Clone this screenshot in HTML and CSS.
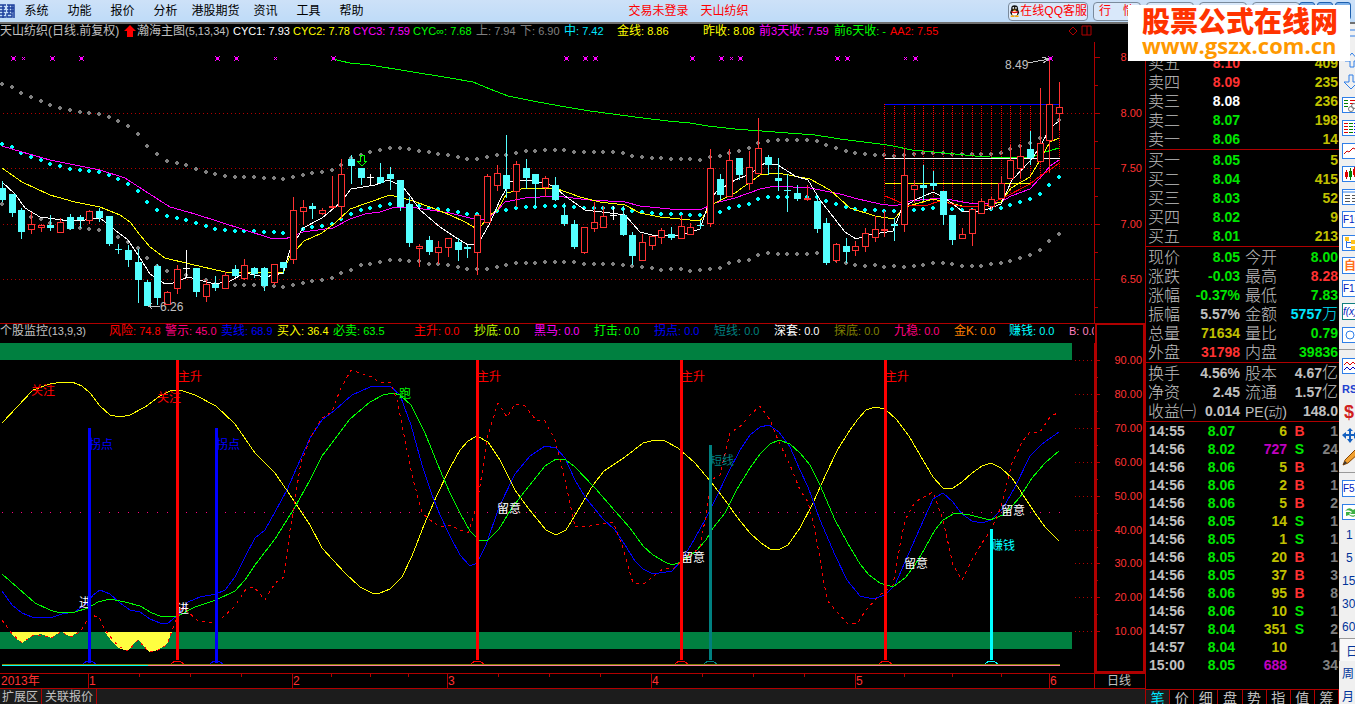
FILE: index.html
```
<!DOCTYPE html>
<html lang="zh-CN">
<head>
    <meta charset="UTF-8">
    <meta name="viewport" content="width=device-width, initial-scale=1.0">
    <title>天山纺织 日线</title>
    <link rel="stylesheet" href="styles.css">
</head>
<body>

<header class="topbar">
    <svg class="logo" viewBox="0 0 15 18"><path d="M0 3h6M0 6h5M0 9h6M0 12h5M0 15h6M3 3v13M7 3h7v13M7 6h7M7 9h7M7 12h5v3H7zM9 3v9M12 3v8" fill="none" stroke="#1d3f9c" stroke-width="1.5"/></svg>
    <nav class="menu">
        <a href="#">系统</a>
        <a href="#">功能</a>
        <a href="#">报价</a>
        <a href="#">分析</a>
        <a href="#" class="wide">港股期货</a>
        <a href="#">资讯</a>
        <a href="#">工具</a>
        <a href="#">帮助</a>
    </nav>
    <div class="title"><span>交易未登录</span><span>天山纺织</span></div>
    <div class="top-buttons">
        <button class="qq">
            <svg viewBox="0 0 13 14" width="13" height="14"><ellipse cx="6.500" cy="8.500" rx="5" ry="4.500" fill="#111"/><circle cx="6.500" cy="4.500" r="4" fill="#111"/><ellipse cx="6.500" cy="9.500" rx="3" ry="3" fill="#fff"/><circle cx="5" cy="3.500" r="1" fill="#fff"/><circle cx="8" cy="3.500" r="1" fill="#fff"/><path d="M4 5.500h5l-2.500 1.500z" fill="#fa0"/><path d="M2.500 7q4 2 8 0v1.500q-4 2-8 0z" fill="#e11"/><path d="M2 13h4M7 13h4" stroke="#fa0" stroke-width="1.500"/></svg>在线QQ客服</button>
        <button class="quote-btn">行　情</button>
        <button class="quote-btn" aria-label="资讯"></button>
        <button class="quote-btn" aria-label="交易"></button>
        <button class="quote-btn" aria-label="服务"></button>
    </div>
    <div class="win-buttons"><button aria-label="最小化"></button><button aria-label="最大化"></button><button aria-label="关闭"></button></div>
</header>

<div class="workspace">
    <main class="charts">
        <div class="info price-info">
            <span class="silver">天山纺织(日线.前复权)</span>
            <svg viewBox="0 0 12 12" width="12" height="12"><path d="M6 0l6 6H9v6H3V6H0z" fill="#f00"/></svg>
            <span class="silver">瀚海主图<i>(5,13,34)</i></span>
            <span class="white"><i>CYC1: 7.93</i></span>
            <span class="yellow"><i>CYC2: 7.78</i></span>
            <span class="magenta"><i>CYC3: 7.59</i></span>
            <span class="lime"><i>CYC∞: 7.68</i></span>
            <span class="gray">上<i>: 7.94</i></span>
            <span class="gray">下<i>: 6.90</i></span>
            <span class="cyan">中<i>: 7.42</i></span>
            <span class="yellow">金线<i>: 8.86</i></span>
            <span class="yellow">昨收<i>: 8.08</i></span>
            <span class="magenta">前<i>3</i>天收<i>: 7.59</i></span>
            <span class="lime">前<i>6</i>天收<i>: -</i></span>
            <span class="red"><i>AA2: 7.55</i></span>
            <svg class="corner" viewBox="0 0 24 12" width="24" height="12"><path d="M5 2l4 4-4 4-4-4zM14 1h9v9h-9zM19 1v9" fill="none" stroke="#b00000"/></svg>
        </div>
        <svg class="chart" id="priceChart" viewBox="0 42 1145 281"></svg>

        <div class="info signal-info">
            <span class="silver">个股监控<i>(13,9,3)</i></span>
            <span class="red">风险<i>: 74.8</i></span>
            <span class="pink">警示<i>: 45.0</i></span>
            <span class="blue">卖线<i>: 68.9</i></span>
            <span class="yellow">买入<i>: 36.4</i></span>
            <span class="lime">必卖<i>: 63.5</i></span>
            <span class="red">主升<i>: 0.0</i></span>
            <span class="chartreuse">抄底<i>: 0.0</i></span>
            <span class="magenta">黑马<i>: 0.0</i></span>
            <span class="lime">打击<i>: 0.0</i></span>
            <span class="blue">拐点<i>: 0.0</i></span>
            <span class="teal">短线<i>: 0.0</i></span>
            <span class="white">深套<i>: 0.0</i></span>
            <span class="olive">探底<i>: 0.0</i></span>
            <span class="pink">九稳<i>: 0.0</i></span>
            <span class="orange">金K<i>: 0.0</i></span>
            <span class="aqua">赚钱<i>: 0.0</i></span>
            <span class="rose"><i>B: 0.0</i></span>
            <span class="box-top"></span>
        </div>
        <svg class="chart" id="signalChart" viewBox="0 343 1145 346"></svg>

        <footer class="tabs">
            <a href="#">扩展区</a>
            <a href="#">关联报价</a>
        </footer>
    </main>

    <aside class="quotes">
        <table class="depth">
            <tr><th>卖五</th><td class="up">8.10</td><td class="vol">409</td></tr>
            <tr><th>卖四</th><td class="up">8.09</td><td class="vol">235</td></tr>
            <tr><th>卖三</th><td class="white">8.08</td><td class="vol">236</td></tr>
            <tr><th>卖二</th><td class="down">8.07</td><td class="vol">198</td></tr>
            <tr><th>卖一</th><td class="down">8.06</td><td class="vol">14</td></tr>
        </table>
        <table class="depth ruled">
            <tr><th>买一</th><td class="down">8.05</td><td class="vol">5</td></tr>
            <tr><th>买二</th><td class="down">8.04</td><td class="vol">415</td></tr>
            <tr><th>买三</th><td class="down">8.03</td><td class="vol">52</td></tr>
            <tr><th>买四</th><td class="down">8.02</td><td class="vol">9</td></tr>
            <tr><th>买五</th><td class="down">8.01</td><td class="vol">213</td></tr>
        </table>
        <table class="stats ruled">
            <tr><th>现价</th><td class="down">8.05</td><th>今开</th><td class="down">8.00</td></tr>
            <tr><th>涨跌</th><td class="down">-0.03</td><th>最高</th><td class="up">8.28</td></tr>
            <tr><th>涨幅</th><td class="down">-0.37%</td><th>最低</th><td class="down">7.83</td></tr>
            <tr><th>振幅</th><td>5.57%</td><th>金额</th><td class="cyan">5757<small>万</small></td></tr>
            <tr><th>总量</th><td class="vol">71634</td><th>量比</th><td class="down">0.79</td></tr>
            <tr><th>外盘</th><td class="up">31798</td><th>内盘</th><td class="down">39836</td></tr>
        </table>
        <table class="stats ruled">
            <tr><th>换手</th><td>4.56%</td><th>股本</th><td>4.67<small>亿</small></td></tr>
            <tr><th>净资</th><td>2.45</td><th>流通</th><td>1.57<small>亿</small></td></tr>
            <tr><th>收益㈠</th><td>0.014</td><th class="pe">PE(动)</th><td>148.0</td></tr>
        </table>
        <table class="ticks ruled">
            <tr><td>14:55</td><td class="down">8.07</td><td class="vol">6</td><td class="up">B</td><td>1</td></tr>
            <tr><td>14:56</td><td class="down">8.02</td><td class="big">727</td><td class="down">S</td><td>24</td></tr>
            <tr><td>14:56</td><td class="down">8.06</td><td class="vol">5</td><td class="up">B</td><td>1</td></tr>
            <tr><td>14:56</td><td class="down">8.06</td><td class="vol">2</td><td class="up">B</td><td>1</td></tr>
            <tr><td>14:56</td><td class="down">8.06</td><td class="vol">5</td><td class="up">B</td><td>2</td></tr>
            <tr><td>14:56</td><td class="down">8.05</td><td class="vol">14</td><td class="down">S</td><td>1</td></tr>
            <tr><td>14:56</td><td class="down">8.05</td><td class="vol">1</td><td class="down">S</td><td>1</td></tr>
            <tr><td>14:56</td><td class="down">8.05</td><td class="vol">20</td><td class="up">B</td><td>1</td></tr>
            <tr><td>14:56</td><td class="down">8.05</td><td class="vol">37</td><td class="up">B</td><td>3</td></tr>
            <tr><td>14:56</td><td class="down">8.06</td><td class="vol">95</td><td class="up">B</td><td>8</td></tr>
            <tr><td>14:56</td><td class="down">8.06</td><td class="vol">10</td><td class="down">S</td><td>1</td></tr>
            <tr><td>14:57</td><td class="down">8.04</td><td class="vol">351</td><td class="down">S</td><td>2</td></tr>
            <tr><td>14:57</td><td class="down">8.04</td><td class="vol">10</td><td></td><td>1</td></tr>
            <tr><td>15:00</td><td class="down">8.05</td><td class="big">688</td><td></td><td>34</td></tr>
        </table>
        <nav class="quote-tabs">
            <a href="#" class="active">笔</a><a href="#">价</a><a href="#">细</a><a href="#">盘</a><a href="#">势</a><a href="#">指</a><a href="#">值</a><a href="#">筹</a>
        </nav>
    </aside>

    <div class="toolbar">
        <button aria-label="返回"><svg viewBox="0 0 20 20"><path d="M20 4H4M20 10H4" class="ln"/></svg></button>
        <button aria-label="上翻"><svg viewBox="0 0 20 20"><path d="M8 18V12H3L10 4l7 8h-5v6z" class="ln"/></svg></button>
        <button aria-label="下翻"><svg viewBox="0 0 20 20"><path d="M7 3v7H2l7 7 7-7h-5V3z" class="ln"/></svg></button>
        <button aria-label="列表"><svg viewBox="1 1 18 14" class="boxed"><path d="M2 3.500h4M2 6.500h4M2 9.500h4" stroke="#008000"/><path d="M8 3.500h6M8 6.500h4" stroke="#e00000"/><circle cx="9" cy="12" r="2.500" class="gr"/><circle cx="12" cy="9" r="2.500" class="gr"/></svg></button>
        <button aria-label="报价表"><svg viewBox="1 1 18 14" class="boxed"><path d="M2 3.500h4M2 6.500h4M2 9.500h4M2 12.500h4" stroke="#e00000"/><path d="M7 3.500h4M7 6.500h4M7 9.500h4M7 12.500h4" stroke="#008000"/><path d="M12 3.500h4M12 6.500h4M12 9.500h4M12 12.500h4" stroke="#0000ff"/></svg></button>
        <button aria-label="分时"><svg viewBox="1 1 18 14" class="boxed"><path d="M2 11l3-3 2 1 4-4 2 1 3-4" stroke="#d00000" fill="none"/></svg></button>
        <button aria-label="K线"><svg viewBox="1 1 18 14" class="boxed"><path d="M4.500 4v9M12.500 1v10" stroke="#d00000"/><path d="M8.500 2v12" stroke="#008000"/><path d="M3 6h3v5H3zM11 3h3v6h-3z" fill="#e00000"/><path d="M7 5h3v6H7z" fill="#008000"/></svg></button>
        <button aria-label="窗口"><svg viewBox="1 1 18 14" class="boxed"><path d="M1 3h17" class="ln"/><path d="M3 6.500h5M3 9.500h5M3 12.500h5M10 6.500h5M10 9.500h5M10 12.500h5" stroke="#555"/></svg></button>
        <button class="txt frame">F10</button>
        <button aria-label="板块"><svg viewBox="1 1 18 14" class="boxed"><path d="M4.500 4v8.500H10M4 7.500h6" stroke="#2f6fe0" fill="none"/><path d="M3 2h4v4H3zM9 5h6v4H9zM9 11h6v4H9z" fill="#ffc320"/></svg></button>
        <button class="txt frame orange">自</button>
        <button class="txt frame">F12</button>
        <button class="txt frame fx">f(x)</button>
        <button aria-label="圆"><svg viewBox="1 1 18 14" class="boxed"><circle cx="8" cy="8" r="4" class="ln"/></svg></button>
        <hr>
        <button aria-label="叠加"><svg viewBox="1 1 18 14" class="boxed"><path d="M2 7l3-3 3 3 3-3 3 3 3-3" stroke="#e00000" fill="none"/><path d="M2 12l3-3 3 3 3-3 3 3 3-3" stroke="#0000c0" fill="none"/></svg></button>
        <button class="txt rsi">RSI</button>
        <button class="txt dollar">$</button>
        <button aria-label="移动"><svg viewBox="0 0 20 20"><path d="M8 3l3 3H9v3h3V7l3 3-3 4v-3H9v3h2l-3 4-3-4h2v-3H4v3l-4-4 4-3v2h3V6H5z" fill="#1460c0"/></svg></button>
        <button aria-label="画线"><svg viewBox="0 0 20 20"><path d="M1 17l2-5L13 2l4 3L6 15z" fill="#f0a030" stroke="#884400"/><path d="M1 17l2-4 2 2z" fill="#333"/></svg></button>
        <hr>
        <button class="txt frame">F5</button>
        <button aria-label="刷新"><svg viewBox="1 1 18 14" class="boxed"><path d="M3 7q4-5 8-1l2-1v5H8l2-2q-3-3-7-1zM15 10q-4 5-8 1l-3 1V8h5l-2 2q3 3 8 0z" fill="#3cb043"/></svg></button>
        <button class="txt num">1</button>
        <button class="txt num">5</button>
        <button class="txt">15</button>
        <button class="txt">30</button>
        <button class="txt">60</button>
        <button class="txt day">日</button>
        <button class="txt">周</button>
        <button class="txt">月</button>
    </div>
</div>

<div class="watermark">
    <strong>股票公式在线网</strong>
    <span>www.gszx.com.cn</span>
</div>

<script src="charts.js"></script>
</body>
</html>
```
FILE: styles.css
```
* {
    box-sizing: border-box;
}
body {
    margin: 0;
    min-height: 100vh;
    display: flex;
    flex-direction: column;
    background: #000;
    color: #c0c0c0;
    font-family: "Liberation Sans", "Noto Sans CJK SC", sans-serif;
    font-size: 12px;
    overflow: hidden;
}
a {
    color: inherit;
    text-decoration: none;
}
button {
    font: inherit;
    padding: 0;
    border: 0;
    background: none;
}

/* top bar */
.topbar {
    height: 24px;
    flex: none;
    display: flex;
    align-items: center;
    background: linear-gradient(#cde1f8, #bedbf8);
    border-bottom: 2px solid #707070;
    color: #000;
    line-height: 16px;
    overflow: hidden;
}
.logo {
    width: 15px;
    height: 18px;
}
.menu {
    display: flex;
}
.menu a {
    width: 43px;
    text-align: center;
}
.menu .wide {
    width: 57px;
}
.title {
    flex: 1;
    display: flex;
    justify-content: center;
    gap: 12px;
    padding-right: 4px;
    color: #f00;
}
.top-buttons {
    display: flex;
    gap: 5px;
    width: 291px;
}
.top-buttons button {
    flex: none;
    height: 19px;
    border: 1px solid #7a8a9c;
    border-radius: 4px;
    background: #d9e8fa;
    color: #f00;
    white-space: nowrap;
}
.top-buttons .qq {
    width: 80px;
    display: flex;
    align-items: center;
    justify-content: center;
}
.top-buttons .quote-btn {
    width: 48px;
}
.win-buttons {
    display: flex;
    gap: 2px;
    width: 56px;
}
.win-buttons button {
    width: 16px;
    height: 18px;
    border: 1px solid #1d5fae;
    border-radius: 3px;
    background: #7fb2ea;
}

.workspace {
    flex: 1;
    display: flex;
    align-items: stretch;
}
.charts {
    flex: 1;
    min-width: 0;
    display: flex;
    flex-direction: column;
}
.chart {
    display: block;
    width: 100%;
    height: auto;
    shape-rendering: crispEdges;
}
.chart text {
    font-size: 12px;
}
.chart .scale {
    font-size: 11px;
    fill: #ff3232;
    text-anchor: end;
}

/* value strips above the charts */
.info {
    display: grid;
    align-items: start;
    height: 18px;
    line-height: 15px;
    white-space: nowrap;
    overflow: hidden;
}
.info i {
    font-size: 11px;
    font-style: normal;
}
.info > span {
    overflow: hidden;
}
.info > svg {
    margin-top: 1px;
}
.price-info {
    grid-template-columns: 124px 13px 96px 60px 60px 60px 63px 44px 44px 53px 86px 56px 75px 56px 178px 1fr;
}
.signal-info {
    height: 20px;
    border-top: 1px solid #b00000;
    grid-template-columns: 109px 56px 56px 56px 56px 81px 60px 60px 60px 60px 60px 60px 60px 60px 60px 55px 60px 25px 1fr;
}
.box-top {
    align-self: stretch;
    border: 2px solid #b00000;
    border-top-width: 1px;
    border-bottom: 0;
    margin-left: 1px;
}
.tabs {
    height: 15px;
    display: flex;
    background: #1c1c1c;
    line-height: 16px;
    overflow: hidden;
}
.tabs a {
    padding: 0 3px 0 2px;
    border-right: 1px solid #b00000;
}
.tabs a + a {
    padding: 0 3px;
}

/* colours */
.silver { color: #c0c0c0; }
.white { color: #fff; }
.yellow { color: #ffff00; }
.magenta { color: #ff00ff; }
.lime { color: #00ff00; }
.gray { color: #808080; }
.cyan { color: #00e6ff; }
.aqua { color: #00ffff; }
.red { color: #ff0000; }
.pink { color: #ff0080; }
.blue { color: #0000ff; }
.chartreuse { color: #c0ff00; }
.teal { color: #008080; }
.olive { color: #808000; }
.orange { color: #ff8000; }
.rose { color: #ff80c0; }
.up { color: #ff3232; }
.down { color: #00e600; }
.vol { color: #c0c000; }
.big { color: #c000c0; }

/* quote panel */
.quotes {
    width: 194px;
    flex: none;
    display: flex;
    flex-direction: column;
    padding-top: 30px;
    border-left: 1px solid #b00000;
    background: #000;
}
.quotes table {
    width: 100%;
    table-layout: fixed;
    border-collapse: separate;
    border-spacing: 0;
}
.quotes .ruled {
    border-top: 1px solid #b00000;
    padding-top: 1px;
}
.quotes th,
.quotes td {
    height: 19px;
    padding: 0 1px 0 0;
    line-height: 18px;
    white-space: nowrap;
}
.quotes th {
    width: 34px;
    padding-left: 2px;
    font-size: 16px;
    font-weight: 300;
    text-align: left;
}
.quotes td {
    font-size: 14px;
    font-weight: bold;
    text-align: right;
    padding-bottom: 1px;
    line-height: 17px;
}
.quotes small {
    font-size: 16px;
    font-weight: 300;
    line-height: 16px;
}
.depth td:nth-child(2),
.stats td:nth-child(2) {
    width: 61px;
}
.stats th:nth-child(3) {
    width: 38px;
    padding-left: 4px;
}
.stats .pe {
    font-size: 14px;
}
.quotes .ticks td {
    height: 18px;
}
.ticks td:nth-child(1) {
    width: 40px;
    text-align: left;
    padding-left: 3px;
}
.ticks td:nth-child(2) {
    width: 50px;
}
.ticks td:nth-child(3) {
    width: 52px;
}
.ticks td:nth-child(4) {
    width: 24px;
    text-align: center;
}
.ticks td:nth-child(5) {
    color: #808080;
}
.quote-tabs {
    height: 15px;
    margin-top: auto;
    display: flex;
    border-top: 1px solid #b00000;
    overflow: hidden;
    font-size: 14px;
    line-height: 16px;
}
.quote-tabs a {
    flex: 1;
    text-align: center;
    border-right: 1px solid #b00000;
}
.quote-tabs .active {
    color: #00e6ff;
    background: #1c1c1c;
}

/* right toolbar, cut by the window edge */
.toolbar {
    width: 16px;
    height: 0;
    min-height: 680px;
    flex: none;
    display: flex;
    flex-direction: column;
    background: #f0f0f0;
    overflow: hidden;
}
.toolbar button {
    flex: none;
    width: 20px;
    height: 23px;
    padding-left: 3px;
    text-align: left;
    color: #003399;
    white-space: nowrap;
}
.toolbar svg {
    display: block;
    width: 20px;
    height: 20px;
}
.toolbar svg.boxed {
    height: 16px;
    border: 1px solid #2f7fe8;
    background: #fff;
}
.toolbar .ln {
    fill: none;
    stroke: #2f7fe8;
}
.toolbar .gr {
    fill: none;
    stroke: #777;
}
.toolbar .frame {
    width: 24px;
    height: 17px;
    margin: 3px 0 3px 3px;
    padding-left: 0;
    border: 1px solid #2f7fe8;
    background: #fff;
    color: #0020c0;
    font-size: 10px;
    line-height: 14px;
}
.toolbar .frame.orange {
    padding-left: 1px;
    color: #ff7020;
    font-size: 12px;
    font-weight: bold;
}
.toolbar .frame.fx {
    border-color: #108080;
    font-style: italic;
}
.toolbar .rsi {
    font-size: 11px;
    font-weight: bold;
    color: #2040d0;
}
.toolbar .dollar {
    padding-left: 5px;
    font-size: 18px;
    line-height: 20px;
    font-weight: bold;
    color: #d02020;
}
.toolbar .num {
    padding-left: 7px;
}
.toolbar .day {
    padding-left: 6px;
    background: #f8f8f8;
    border-top: 1px solid #999;
    border-left: 1px solid #999;
}
.toolbar hr {
    flex: none;
    width: 100%;
    height: 1px;
    margin: 3px 0 4px;
    border: 0;
    background: #999;
}

/* site badge over the window corner */
.watermark {
    position: absolute;
    top: 5px;
    right: 5px;
    width: 222px;
    height: 56px;
    padding: 1px 0 0 14px;
    background: #fff;
    white-space: nowrap;
}
.watermark strong {
    display: block;
    font-family: "Noto Sans CJK SC", sans-serif;
    font-size: 28px;
    font-weight: 900;
    line-height: 29px;
    color: #ff3300;
}
.watermark span {
    display: block;
    font-family: "Open Sans", sans-serif;
    font-size: 22px;
    font-weight: bold;
    line-height: 20px;
    color: #ff9900;
}
```
FILE: charts.js
```
const NS = "http://www.w3.org/2000/svg";
const X = i => 2 + Math.round(i * 9.697);

function add(svg, tag, attrs, text) {
    const el = document.createElementNS(NS, tag);
    for (const k in attrs) el.setAttribute(k, attrs[k]);
    if (text) el.textContent = text;
    svg.appendChild(el);
}
function line(svg, points, color, extra) {
    add(svg, "polyline", Object.assign({ points: points, fill: "none", stroke: color }, extra));
}
function rect(svg, x, y, w, h, color) {
    add(svg, "rect", { x: x, y: y, width: w, height: h, fill: color });
}
function label(svg, x, y, text, color) {
    add(svg, "text", { x: x, y: y, fill: color }, text);
}

/* type, body top, body bottom, high, low */
const candles = [
    ["d",188,200,181,202],["d",194,213,194,217],["d",210,232,208,239],["u",224,230,212,234],["u",225,228,224,232],
    ["d",225,228,215,231],["u",222,233,218,233],["d",217,229,214,230],["d",217,220,215,228],["u",211,221,210,224],
    ["d",211,218,208,222],["d",216,244,216,246],["d",249,250,244,254],["d",250,260,245,267],["d",262,280,249,303],
    ["d",282,306,280,306],["d",266,298,264,305],["u",292,305,291,305],["u",269,289,265,294],["w",268,269,250,278],
    ["d",268,292,268,297],["u",284,297,280,302],["d",284,288,276,291],["u",275,289,272,289],["d",269,276,265,277],
    ["u",265,279,259,280],["d",268,274,267,278],["d",268,286,267,291],["u",264,283,264,285],["d",262,268,262,274],
    ["u",210,260,197,264],["u",207,212,200,225],["d",206,209,203,219],["u",210,214,208,215],["u",206,208,176,209],
    ["u",174,207,159,219],["d",159,166,155,184],["d",168,178,168,185],["w",177,178,174,186],["d",177,183,163,184],
    ["d",174,179,167,190],["d",180,207,180,211],["d",204,243,197,247],["u",246,249,244,267],["d",240,252,236,255],
    ["u",247,253,241,264],["u",238,248,238,257],["d",242,250,238,261],["d",247,249,245,258],["u",215,253,214,275],
    ["u",176,223,174,223],["u",173,186,165,191],["d",175,189,135,198],["u",164,192,161,207],["d",168,178,159,189],
    ["d",174,184,174,207],["u",178,188,176,197],["d",185,200,177,201],["d",215,224,203,226],["d",224,247,220,249],
    ["u",227,253,227,254],["u",222,229,202,232],["u",216,228,206,228],["w",215,216,206,220],["d",215,235,206,236],
    ["d",235,256,232,265],["u",242,261,234,261],["u",236,246,236,250],["u",230,238,228,244],["d",234,238,227,240],
    ["u",226,239,215,239],["u",227,235,223,235],["d",225,226,220,229],["u",168,224,149,227],["d",179,195,174,200],
    ["u",160,197,149,197],["d",158,175,158,180],["u",167,184,151,190],["u",148,174,118,174],["d",157,165,155,175],
    ["d",178,181,158,191],["d",190,191,174,212],["d",193,199,185,201],["u",198,200,185,201],["d",201,229,198,233],
    ["d",223,263,218,265],["u",244,261,243,263],["d",246,252,238,263],["u",246,251,241,256],["u",233,247,228,252],
    ["u",229,238,216,242],["u",229,231,211,237],["d",224,226,218,241],["u",175,225,148,232],["u",185,190,180,203],
    ["d",185,188,165,201],["d",183,186,171,190],["d",191,215,191,225],["d",215,240,215,245],["u",234,239,228,239],
    ["u",209,234,209,246],["u",201,214,198,214],["u",199,207,197,210],["u",183,199,176,199],["u",160,179,145,179],
    ["u",156,169,145,178],["d",149,158,131,165],["u",143,162,88,162],["u",104,141,60,172],["u",107,114,82,130]
];

const upper = [84,87,93,97,101,105,108,110,112,113,114,117,121,126,134,146,154,161,163,165,169,172,174,176,177,177,177,178,178,179,177,175,173,172,170,165,158,155,152,150,148,148,149,151,152,154,155,157,159,159,157,155,155,153,151,151,150,150,150,152,152,152,152,152,153,156,157,158,158,159,159,159,160,157,156,153,151,148,143,141,140,140,140,140,141,145,148,151,153,154,155,155,156,155,154,153,153,153,154,154,154,154,154,153,149,146,143,138,129,120];
const middle = [144,147,153,157,160,164,166,169,170,171,172,175,179,184,191,202,210,216,218,220,223,226,229,230,231,231,231,232,232,233,231,229,227,226,224,219,214,210,208,206,204,204,205,206,208,209,210,212,214,214,213,211,210,208,207,207,206,206,206,207,208,208,208,208,209,211,212,213,214,214,214,215,215,213,212,208,206,204,199,197,197,197,197,197,197,201,204,207,209,210,210,211,211,211,210,209,208,208,209,210,210,210,209,208,205,202,199,194,185,177];

function dot(svg, x, y, color) {
    rect(svg, x - 2, y - 1, 4, 2, color);
    rect(svg, x - 1, y - 2, 2, 4, color);
}

function drawPrice() {
    const svg = document.getElementById("priceChart");

    [113, 168, 224, 279].forEach(y => line(svg, `3,${y + .5} 1094,${y + .5}`, "#b00000", { "stroke-dasharray": "1 3" }));

    // band dots
    for (let i = 0; i < 110; i++) {
        dot(svg, X(i), upper[i], "#808080");
        dot(svg, X(i), 2 * middle[i] - upper[i], "#808080");
        dot(svg, X(i), middle[i], "#00ffff");
    }

    // target box
    for (let i = 91; i < 110; i++) {
        const bottom = i < 103 ? 203 : 203 - (i - 103) * 6;
        line(svg, `${X(i) + .5},104 ${X(i) + .5},${bottom}`, "#ff0000", { "stroke-dasharray": "1 1" });
    }
    rect(svg, 885, 104, 175, 1, "#0000ff");
    rect(svg, 885, 158, 175, 1, "#ffffff");
    rect(svg, 885, 183, 145, 1, "#ffff00");

    line(svg, "333,59 341,61 350,63 370,65 450,78 473,82 490,89 508,96 533,101 560,106 590,111 620,115 643,118 668,121 690,123 708,126 735,129 775,132 815,135 840,139 880,144 893,146 912,150 945,153 975,156 990,157 1030,158 1045,152 1059,148", "#00ff00");
    line(svg, "2,146 22,152 50,160 100,170 125,178 145,191 170,207 195,214 220,222 245,230 270,238 285,239 303,232 333,228 350,219 365,214 380,212 395,207 410,207 430,210 450,213 470,218 485,220 495,213 505,202 525,198 555,196 590,200 625,202 640,206 670,209 700,210 715,203 735,198 760,189 775,186 810,188 840,194 858,199 880,204 895,206 910,201 940,198 975,204 1001,202 1011,196 1030,189 1040,178 1050,166 1059,160", "#ff00ff");
    line(svg, "2,168 22,182 50,195 75,202 100,207 120,215 130,222 140,235 150,247 165,258 190,264 225,272 250,272 283,273 290,256 296,250 304,241 322,233 334,224 350,209 370,202 390,195 410,200 430,207 450,215 465,222 477,229 482,225 488,216 497,211 507,193 525,188 555,188 580,197 600,202 625,205 640,213 660,217 700,221 707,211 715,203 735,193 760,175 778,173 810,179 830,190 850,208 875,216 894,219 905,207 933,199 945,202 962,206 985,206 1001,202 1011,188 1030,177 1040,160 1050,142 1059,138", "#ffff00");
    line(svg, "2,182 15,194 25,208 40,217 70,221 85,220 100,218 115,230 128,240 140,258 150,274 165,284 173,283 188,277 215,284 230,281 245,273 265,277 283,273 290,250 303,228 322,218 340,203 351,189 375,185 388,180 402,186 411,197 420,210 440,227 455,237 468,245 478,244 490,223 500,200 510,182 525,180 545,183 555,187 565,196 585,210 610,213 625,215 640,232 652,235 680,235 700,229 708,205 716,192 735,180 750,174 765,163 778,165 795,176 808,180 820,200 845,232 856,239 868,235 893,231 902,208 915,200 933,192 945,198 962,211 980,212 1001,204 1012,180 1030,161 1040,147 1050,128 1059,121", "#ffffff");
    line(svg, "885,196 895,200 905,205 925,206 940,201 960,206 985,206 1005,197 1030,184 1040,176 1050,170 1059,163", "#ff0000");

    candles.forEach((c, i) => {
        const [type, top, bottom, high, low] = c;
        const x = X(i);
        if (type === "u") {
            rect(svg, x, high, 1, low - high, "#ff3232");
            add(svg, "rect", { x: x - 2.5, y: top + .5, width: 6, height: Math.max(bottom - top - 1, 1), fill: "#000", stroke: "#ff3232" });
        } else {
            const color = type === "w" ? "#ffffff" : "#54ffff";
            rect(svg, x, high, 1, low - high, color);
            rect(svg, x - 3, top, 7, bottom - top, color);
        }
    });

    // sell marks, the second list is the small ones
    [13, 52, 81, 217, 236, 333, 566, 585, 595, 692, 721, 740, 837, 847, 915, 1050].forEach(x => {
        rect(svg, x - 1, 57, 3, 3, "#ff00ff");
        [[-2, 56], [2, 56], [-2, 60], [2, 60]].forEach(([dx, y]) => rect(svg, x + dx, y, 1, 1, "#ff00ff"));
    });
    [23, 275, 731, 905].forEach(x => {
        rect(svg, x, 58, 1, 1, "#ff00ff");
        [[-1, 57], [1, 57], [-1, 59], [1, 59]].forEach(([dx, y]) => rect(svg, x + dx, y, 1, 1, "#ff00ff"));
    });
    line(svg, "360,155 364,155 364,161 367,161 362,166 357,161 360,161 360,155", "#00ff00");

    label(svg, 1005, 69, "8.49", "#c0c0c0");
    line(svg, "1028,63 1049,59 1042,57", "#c0c0c0");
    line(svg, "1049,59 1043,63", "#c0c0c0");
    label(svg, 160, 311, "6.26", "#c0c0c0");
    line(svg, "160,306 149,306 152,303", "#c0c0c0");
    line(svg, "149,306 152,309", "#c0c0c0");

    // price scale
    rect(svg, 1094, 42, 1, 281, "#b00000");
    [[57, "8.50"], [113, "8.00"], [168, "7.50"], [224, "7.00"], [279, "6.50"]].forEach(([y, t]) => {
        rect(svg, 1095, y, 5, 1, "#b00000");
        rect(svg, 1095, y + 28, 3, 1, "#b00000");
        add(svg, "text", { x: 1142, y: y + 4, class: "scale" }, t);
    });
}

function drawSignals() {
    const svg = document.getElementById("signalChart");

    rect(svg, 0, 343, 1072, 17, "#008040");
    rect(svg, 0, 632, 1072, 17, "#008040");
    ["10,632 14,637 22,643 32,636 41,634 51,638 60,632", "62,632 71,637 78,632", "105,632 110,639 118,648 128,651 138,639 149,652 158,650 167,644 172,632"]
        .forEach(p => add(svg, "polygon", { points: p, fill: "#ffff40" }));
    for (let i = 0; i < 110; i++) rect(svg, X(i), 512, 1, 1, "#ff0080");

    line(svg, "2,423 33,390 50,384 62,382 72,382 82,386 90,393 100,406 110,415 120,417 130,415 145,407 160,396 170,391 180,390 195,395 216,406 235,424 255,453 275,473 290,495 310,525 322,548 345,573 360,587 372,593 380,593 390,589 402,577 412,556 424,525 437,495 450,468 460,450 468,441 477,436 488,442 500,460 515,490 528,508 546,530 556,535 566,530 580,507 593,485 604,471 625,457 643,443 655,440 665,441 678,448 695,463 711,482 725,500 737,517 750,533 761,543 770,549 778,550 788,545 800,528 813,503 826,474 838,449 850,430 858,419 866,410 875,407 885,409 897,420 909,436 920,455 933,477 943,488 953,488 962,482 972,473 982,466 991,463 1001,468 1012,478 1025,498 1035,513 1045,527 1059,541", "#ffff00");
    line(svg, "2,591 12,605 22,613 32,617 50,618 62,614 75,612 88,602 93,595 100,590 110,594 120,603 130,610 140,612 150,619 160,623 167,624 178,615 188,602 200,597 216,594 225,590 235,577 245,557 255,538 265,530 275,512 287,490 297,467 310,438 322,420 335,410 352,395 370,387 390,386 400,395 411,425 422,465 432,495 440,515 450,536 460,555 470,566 477,563 486,545 499,507 515,474 530,456 545,446 556,448 565,458 575,480 585,497 603,519 615,530 625,545 635,561 643,569 653,574 672,571 681,561 691,545 705,520 715,500 728,473 740,450 750,435 760,427 769,425 779,432 790,447 800,470 808,487 820,520 835,555 847,580 860,596 873,599 885,595 895,585 905,562 920,528 933,499 943,493 953,502 962,514 972,521 982,523 991,520 1003,508 1015,487 1030,456 1042,444 1059,432", "#0000ff");
    line(svg, "2,574 18,588 35,603 50,610 60,613 75,612 88,608 98,602 110,599 125,602 140,606 152,613 160,616 168,617 178,616 195,607 216,600 235,591 245,580 255,565 275,539 295,507 310,480 322,456 350,419 370,402 383,395 393,393 400,395 411,405 425,433 440,470 450,493 460,513 470,531 479,540 488,540 499,529 510,511 525,491 545,466 556,459 566,460 575,467 595,488 615,511 630,528 643,546 653,555 665,562 672,565 681,562 695,552 706,540 713,528 725,513 737,489 750,468 760,454 770,444 779,440 790,444 800,453 810,465 820,485 835,520 847,542 860,564 869,575 880,583 893,587 905,578 915,565 925,548 935,530 943,520 955,513 970,515 990,520 1003,515 1012,506 1020,497 1032,478 1045,463 1059,451", "#00ff00");
    line(svg, "2,620 12,634 22,643 32,636 41,635 51,638 61,632 71,637 81,631 90,615 99,617 105,630 118,646 128,651 138,640 149,652 158,650 167,645 175,622 183,607 197,620 212,623 222,618 235,606 246,589 254,587 265,600 275,583 284,577 290,530 301,462 312,435 322,418 332,412 340,390 351,370 360,373 372,377 380,383 390,382 397,400 404,435 412,475 422,513 430,520 440,527 450,525 460,530 468,533 477,505 488,435 498,403 507,417 515,404 525,406 536,420 545,421 555,440 565,480 575,527 590,526 613,522 622,545 633,583 645,583 655,575 664,568 674,568 685,558 700,548 705,520 711,480 720,475 730,433 742,425 750,415 760,406 770,420 778,440 790,465 800,490 808,502 815,530 827,600 837,612 847,623 857,624 866,610 880,595 893,585 900,545 905,520 915,502 933,492 943,520 953,565 962,580 972,560 982,543 991,530 1001,507 1012,463 1022,442 1030,432 1040,432 1050,417 1059,412", "#ff0000", { "stroke-dasharray": "3 4" });

    // labels
    [[31, 390, "关注", "#ff0000"], [157, 397, "关注", "#ff0000"], [178, 376, "主升", "#ff0000"], [477, 376, "主升", "#ff0000"],
     [681, 376, "主升", "#ff0000"], [885, 376, "主升", "#ff0000"], [89, 444, "拐点", "#0000ff"], [216, 444, "拐点", "#0000ff"],
     [79, 602, "进", "#ffffff"], [177, 608, "进", "#ffffff"], [399, 393, "跑", "#00ff00"], [497, 508, "留意", "#ffffff"],
     [681, 557, "留意", "#ffffff"], [904, 563, "留意", "#ffffff"], [1001, 510, "留意", "#ffffff"], [710, 460, "短线", "#008080"],
     [991, 545, "赚钱", "#00ffff"]
    ].forEach(([x, y, t, c]) => label(svg, x, y + 5, t, c));

    rect(svg, 2, 664, 1058, 1, "#808000");
    rect(svg, 2, 665, 146, 1, "#00ffff");
    rect(svg, 148, 665, 912, 1, "#ff80a0");

    // signal bars
    [[89, 428, "#0000ff"], [177, 360, "#ff0000"], [216, 428, "#0000ff"], [477, 360, "#ff0000"], [681, 360, "#ff0000"],
     [710, 445, "#008080"], [885, 360, "#ff0000"], [991, 529, "#00ffff"]
    ].forEach(([x, y, c]) => {
        rect(svg, x - 1, y, 3, (c === "#0000ff" ? 663 : 660) - y, c);
        line(svg, `${x - 6},664 ${x - 2},661 ${x + 3},661 ${x + 7},664`, c);
    });

    // value scale
    add(svg, "path", { d: "M1096 343V672H1144V343", fill: "none", stroke: "#b00000", "stroke-width": 2 });
    rect(svg, 1094, 343, 1, 330, "#b00000");
    for (let v = 90; v >= 10; v -= 10) {
        const y = 360 + Math.round((90 - v) * 3.39);
        line(svg, `1075,${y + .5} 1094,${y + .5}`, "#b00000", { "stroke-dasharray": "1 3" });
        rect(svg, 1095, y, 5, 1, "#b00000");
        if (v > 10) rect(svg, 1095, y + 17, 3, 1, "#b00000");
        add(svg, "text", { x: 1142, y: y + 4, class: "scale" }, v + ".00");
    }

    // dates
    rect(svg, 0, 673, 1145, 1, "#b00000");
    rect(svg, 0, 688, 1145, 1, "#b00000");
    rect(svg, 1094, 673, 1, 16, "#b00000");
    label(svg, 1, 685, "2013年", "#ff3232");
    [[88, "1"], [292, "2"], [447, "3"], [651, "4"], [855, "5"], [1049, "6"]].forEach(([x, t]) => {
        rect(svg, x, 673, 1, 15, "#b00000");
        label(svg, x + 1, 685, t, "#ff3232");
    });
    [139, 190, 241, 331, 370, 408, 498, 549, 600, 702, 753, 804, 904, 952, 1001].forEach(x => rect(svg, x, 673, 1, 4, "#b00000"));
    label(svg, 1107, 685, "日线", "#c0c0c0");
}

drawPrice();
drawSignals();
```
